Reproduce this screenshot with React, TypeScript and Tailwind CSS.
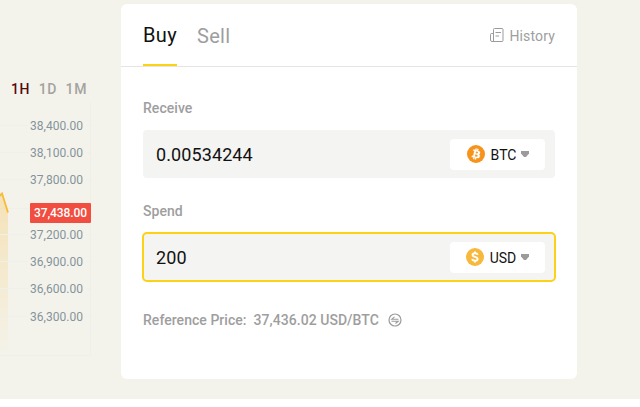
import React, { useState } from 'react';

const PRICE_TICKS = [
  { label: '38,400.00', y: 126 },
  { label: '38,100.00', y: 153 },
  { label: '37,800.00', y: 180 },
  { label: '37,200.00', y: 235 },
  { label: '36,900.00', y: 262 },
  { label: '36,600.00', y: 289 },
  { label: '36,300.00', y: 317 },
];

const RANGES = ['1H', '1D', '1M'];

const BtcIcon: React.FC = () => (
  <svg viewBox="0 0 32 32" className="ml-px w-[18px] h-[18px] shrink-0">
    <circle cx="16" cy="16" r="16" fill="#f7931a" />
    <path
      fill="#fff"
      stroke="#fff"
      strokeWidth="0.5"
      d="M23.19 14.02c.31-2.1-1.29-3.23-3.47-3.98l.71-2.84-1.73-.43-.69 2.77c-.45-.12-.92-.22-1.38-.33l.69-2.78-1.72-.43-.71 2.84c-.38-.09-.75-.17-1.11-.26l-2.38-.6-.46 1.85s1.28.29 1.26.31c.7.17.82.64.8 1l-1.94 7.78c-.09.21-.3.53-.8.41.02.03-1.25-.31-1.25-.31l-.86 1.98 2.25.56c.42.1.83.21 1.23.31l-.72 2.87 1.73.43.71-2.84c.47.13.93.25 1.38.36l-.71 2.83 1.73.43.72-2.87c2.95.56 5.16.33 6.1-2.33.75-2.15-.04-3.38-1.59-4.19 1.13-.26 1.98-1 2.21-2.54zm-3.95 5.54c-.54 2.15-4.15.99-5.33.69l.95-3.81c1.17.29 4.93.87 4.38 3.12zm.53-5.57c-.49 1.95-3.5.96-4.47.72l.86-3.46c.98.24 4.12.7 3.61 2.74z"
    />
  </svg>
);

const UsdIcon: React.FC = () => (
  <svg viewBox="0 0 18 18" className="w-[18px] h-[18px] shrink-0">
    <circle cx="9" cy="9" r="9" fill="#f8b83c" />
    <path
      d="M11.6 6.9C11.4 5.8 10.4 5.2 9 5.2c-1.5 0-2.5.7-2.5 1.8C6.5 9.5 11.6 8.3 11.6 11c0 1.1-1 1.8-2.6 1.8s-2.6-.7-2.7-1.9M9 3.6v1.6M9 12.8v1.6"
      fill="none"
      stroke="#fff"
      strokeWidth="1.9"
    />
  </svg>
);

const PriceChart: React.FC = () => (
  <svg width="121" height="255" viewBox="0 102 121 255" className="block">
    <defs>
      <linearGradient id="area" x1="0" y1="0" x2="0" y2="1">
        <stop offset="0" stopColor="#f7b93c" stopOpacity="0.3" />
        <stop offset="1" stopColor="#f7b93c" stopOpacity="0.02" />
      </linearGradient>
    </defs>
    <path d="M90.5 102V355.5H0" fill="none" stroke="#efefea" />
    <path d="M0 208.5H90" stroke="#f0f0eb" />
    <path d="M0 195L2 193.5L8 212V350H0Z" fill="url(#area)" />
    <path d="M-1 196.5L2 193.5L8 212.5" fill="none" stroke="#f9ba35" strokeWidth="1.8" />
    {PRICE_TICKS.map((tick) => (
      <g key={tick.label}>
        <path d={`M0 ${tick.y - 0.5}H28M86 ${tick.y - 0.5}H90`} stroke="#f0f0eb" />
        <text
          x="30"
          y={tick.y + 4}
          textLength="53"
          className="fill-[#84939d] text-[12px] font-['Roboto',sans-serif]"
        >
          {tick.label}
        </text>
      </g>
    ))}
    {/* Last traded price */}
    <rect x="30" y="203" width="61" height="20" rx="1" fill="#f14d40" />
    <text
      x="34"
      y="217"
      textLength="53"
      className="fill-white text-[12px] font-medium font-['Roboto',sans-serif]"
    >
      37,438.00
    </text>
  </svg>
);

interface AmountFieldProps {
  label: string;
  value: string;
  currency: string;
  icon: React.ReactNode;
  active?: boolean;
  onChange: (value: string) => void;
}

const AmountField: React.FC<AmountFieldProps> = ({ label, value, currency, icon, active, onChange }) => (
  <div>
    <div className="h-5 text-sm leading-5 font-medium tracking-[0.05px] text-[#9e9e9e]">{label}</div>
    <div
      className={
        active
          ? 'mt-[11px] -mx-px h-[50px] pl-3 pr-[9px] flex items-center rounded-[5px] border-2 border-[#fcd116] bg-[#f4f4f2]'
          : 'mt-3 h-12 pl-[13px] pr-2.5 flex items-center rounded bg-[#f4f4f2]'
      }
    >
      <input
        value={value}
        onChange={(e) => onChange(e.target.value)}
        className="flex-1 min-w-0 pt-0.5 bg-transparent text-lg tracking-[0.1px] text-[#111] outline-none"
      />
      <button className="w-[95px] h-[31px] flex items-center justify-center rounded bg-white text-sm text-[#111]">
        {icon}
        <span className="ml-1.5 pt-0.5">{currency}</span>
        <svg viewBox="0 0 8 6" className="ml-[5px] w-2 h-1.5">
          <path d="M0 0H8V2.5L5 6H3L0 2.5Z" fill="#9b9b9b" />
        </svg>
      </button>
    </div>
  </div>
);

const App: React.FC = () => {
  const [receive, setReceive] = useState('0.00534244');
  const [spend, setSpend] = useState('200');

  return (
    <div className="w-[640px] h-[407px] overflow-hidden bg-white font-['Roboto',sans-serif]">
      <div className="h-[399px] flex bg-[#f4f3eb]">
        {/* Chart side */}
        <div className="w-[121px] pt-[79px]">
          <div className="h-[23px] pl-[11px] flex items-start gap-[8.5px] text-sm leading-5 font-medium tracking-[0.65px]">
            {RANGES.map((range) => (
              <button key={range} className={range === '1H' ? 'text-[#560b0b]' : 'text-[#a3a3a0]'}>
                {range}
              </button>
            ))}
          </div>
          <PriceChart />
        </div>

        {/* Trade card */}
        <div className="mt-1 w-[456px] h-[375px] rounded-md bg-white">
          <div className="h-[63px] px-[22px] flex items-stretch border-b border-[#e5e5e5] text-xl">
            <button className="w-[34px] h-[62px] pt-0.5 border-b-2 border-[#fcd116] tracking-[0.3px] text-[#111]">
              Buy
            </button>
            <button className="ml-5 h-[62px] pt-0.5 tracking-[0.3px] text-[#9e9e9e]">Sell</button>
            <button className="ml-auto pt-0.5 flex items-center text-sm tracking-[0.15px] text-[#9e9e9e]">
              <svg viewBox="0 0 14 15" className="mr-[5px] mb-0.5 w-3.5 h-[15px]" fill="none" stroke="#9b9b9b">
                <path d="M3.5 13.5V1.5a1 1 0 0 1 1-1H12a1 1 0 0 1 1 1V12.5a1 1 0 0 1-1 1H2a1.5 1.5 0 0 1-1.5-1.5V6.5a1 1 0 0 1 1-1H3.5M5.5 4.5H11M5.5 8H9" />
              </svg>
              History
            </button>
          </div>

          <div className="px-[22px] pt-[31px]">
            <AmountField
              label="Receive"
              value={receive}
              currency="BTC"
              icon={<BtcIcon />}
              onChange={setReceive}
            />
            <div className="h-[23px]" />
            <AmountField
              label="Spend"
              value={spend}
              currency="USD"
              icon={<UsdIcon />}
              active
              onChange={setSpend}
            />
            <div className="mt-7 flex items-center text-sm leading-5 font-medium tracking-[0.04px] text-[#9e9e9e]">
              <span>Reference Price:</span>
              <span className="ml-[7px]">37,436.02 USD/BTC</span>
              <svg viewBox="0 0 14 14" className="ml-[9px] w-3.5 h-3.5" fill="none" stroke="#9b9b9b">
                <circle cx="7" cy="7" r="6" strokeWidth="1.2" />
                <path d="M10.5 6.2H3.8L6.5 3.8M3.5 8.2H10.2L7.5 10.5" strokeWidth="1.1" />
              </svg>
            </div>
          </div>
        </div>
      </div>
    </div>
  );
};

export default App;
